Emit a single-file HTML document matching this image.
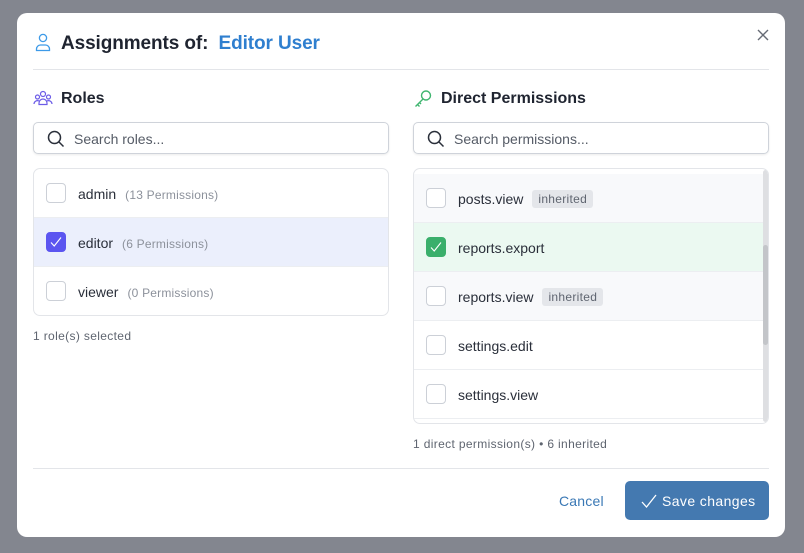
<!DOCTYPE html>
<html><head><meta charset="utf-8"><style>
*{box-sizing:border-box;margin:0;padding:0}
body{width:804px;height:553px;background:#83868f;font-family:"Liberation Sans",sans-serif;position:relative;overflow:hidden;color:#1f2430}
.dlg{position:absolute;left:17px;top:13px;width:768px;height:524px;background:#fff;border-radius:10px}
.abs{position:absolute}
.title{left:44px;top:20px;font-size:19px;font-weight:bold;color:#1f2430;white-space:nowrap;letter-spacing:-0.1px}
.title span{color:#2f7fcf;margin-left:5px}
.hr{position:absolute;left:16px;width:736px;height:1px;background:#e3e5e9}
.h{font-size:16px;font-weight:bold;color:#1f2430}
.search{position:absolute;width:356px;height:32px;border:1px solid #cfd3da;border-radius:5px;box-shadow:0 1px 2px rgba(0,0,0,.08);font-size:14px;color:#555b66}
.search svg{position:absolute;left:13px;top:7px}
.search div{position:absolute;left:40px;top:8px}
.list{position:absolute;border:1px solid #e3e5e9;border-radius:7px;overflow:hidden;background:#fff}
.row{position:absolute;left:0;right:0;height:49px;border-bottom:1px solid #eceef1;font-size:14px;color:#2a2f3a}
.cb{position:absolute;left:12px;top:14px;width:20px;height:20px;border:1px solid #ccd0d7;border-radius:4px;background:#fff}
.lbl{position:absolute;left:44px;top:17px;white-space:nowrap}
.cnt{color:#8c919b;font-size:12px;margin-left:9px;letter-spacing:0.2px}
.badge{display:inline-block;background:#e4e6ea;color:#5f6570;font-size:12px;padding:2px 6px;border-radius:3px;margin-left:9px;vertical-align:1px;letter-spacing:0.3px}
.small{font-size:12px;color:#5f6570;letter-spacing:0.35px}
</style></head><body>
<div class="dlg">
<svg class="abs" style="left:18px;top:20px" width="16" height="19" viewBox="0 0 16 19" fill="none" stroke="#3d9ae8" stroke-width="1.3"><circle cx="8" cy="5" r="3.6"/><path d="M1.5 17.5v-1.5a4 4 0 0 1 4-4h5a4 4 0 0 1 4 4v1.5z"/></svg>
<div class="abs title">Assignments of:&nbsp;<span>Editor User</span></div>
<svg class="abs" style="left:739px;top:15px" width="14" height="14" viewBox="0 0 14 14" stroke="#666b75" stroke-width="1.4"><path d="M2 2l10 10M12 2L2 12"/></svg>
<div class="hr" style="top:56px"></div>

<svg class="abs" style="left:16px;top:77px" width="20" height="18" viewBox="0 0 20 18" fill="none" stroke="#6c5ce7" stroke-width="1.2"><circle cx="10" cy="4" r="2.5"/><circle cx="4.5" cy="7" r="2"/><circle cx="15.5" cy="7" r="2"/><path d="M6 13a4 4 0 0 1 8 0v1.5H6z"/><path d="M1 14a3.5 3.5 0 0 1 5-3M19 14a3.5 3.5 0 0 0-5-3"/></svg>
<div class="abs h" style="left:44px;top:77px">Roles</div>
<div class="search" style="left:16px;top:109px"><svg width="18" height="18" viewBox="0 0 18 18" fill="none" stroke="#2a2f3a" stroke-width="1.5"><circle cx="7.5" cy="7.5" r="6"/><path d="M12 12l4.5 4.5"/></svg><div>Search roles...</div></div>
<div class="list" style="left:16px;top:155px;width:356px;height:148px">
 <div class="row" style="top:0"><div class="cb"></div><div class="lbl">admin<span class="cnt">(13 Permissions)</span></div></div>
 <div class="row" style="top:49px;background:#ebeffc"><div class="cb" style="background:#5b55f0;border-color:#5b55f0"><svg width="18" height="18" viewBox="0 0 18 18" fill="none" stroke="#fff" stroke-width="1.1"><path d="M4 9.5l3.2 3.5L14 4.5"/></svg></div><div class="lbl">editor<span class="cnt">(6 Permissions)</span></div></div>
 <div class="row" style="top:98px;border-bottom:none"><div class="cb"></div><div class="lbl">viewer<span class="cnt">(0 Permissions)</span></div></div>
</div>
<div class="abs small" style="left:16px;top:316px">1 role(s) selected</div>

<svg class="abs" style="left:396px;top:76px" width="20" height="20" viewBox="0 0 20 20" fill="none" stroke="#3fb56f" stroke-width="1.4"><circle cx="13" cy="6.5" r="4.5"/><path d="M10 10L2.5 17.5M4.5 15.5l2 2M6.5 13.5l1.5 1.5"/></svg>
<div class="abs h" style="left:424px;top:77px">Direct Permissions</div>
<div class="search" style="left:396px;top:109px"><svg width="18" height="18" viewBox="0 0 18 18" fill="none" stroke="#2a2f3a" stroke-width="1.5"><circle cx="7.5" cy="7.5" r="6"/><path d="M12 12l4.5 4.5"/></svg><div>Search permissions...</div></div>
<div class="list" style="left:396px;top:155px;width:356px;height:256px">
 <div class="row" style="top:-7px;height:6px;background:#f8f9fb"></div>
 <div class="row" style="top:5px;background:#f8f9fb"><div class="cb"></div><div class="lbl" style="top:16px">posts.view<span class="badge">inherited</span></div></div>
 <div class="row" style="top:54px;background:#ebf9f1"><div class="cb" style="background:#3aaf6b;border-color:#3aaf6b"><svg width="18" height="18" viewBox="0 0 18 18" fill="none" stroke="#fff" stroke-width="1.1"><path d="M4 9.5l3.2 3.5L14 4.5"/></svg></div><div class="lbl">reports.export</div></div>
 <div class="row" style="top:103px;background:#f8f9fb"><div class="cb"></div><div class="lbl" style="top:16px">reports.view<span class="badge">inherited</span></div></div>
 <div class="row" style="top:152px"><div class="cb"></div><div class="lbl">settings.edit</div></div>
 <div class="row" style="top:201px"><div class="cb"></div><div class="lbl">settings.view</div></div>
 <div class="abs" style="left:349px;top:1px;width:5px;height:252px;background:#dedfe2;border-radius:3px"></div>
 <div class="abs" style="left:349px;top:76px;width:5px;height:100px;background:#c3c5c9;border-radius:3px"></div>
</div>
<div class="abs small" style="left:396px;top:424px">1 direct permission(s) &bull; 6 inherited</div>

<div class="hr" style="top:455px"></div>
<div class="abs" style="left:542px;top:480px;font-size:14px;color:#3a78b5;letter-spacing:0.2px">Cancel</div>
<div class="abs" style="left:608px;top:468px;width:144px;height:39px;background:#4479b0;border-radius:5px;color:#fff;font-size:14px">
 <svg class="abs" style="left:15px;top:11px" width="18" height="18" viewBox="0 0 18 18" fill="none" stroke="#fff" stroke-width="1.3"><path d="M2 10l4.5 5L16 3"/></svg>
 <div class="abs" style="left:37px;top:12px;letter-spacing:0.4px">Save changes</div>
</div>
</div>
</body></html>
